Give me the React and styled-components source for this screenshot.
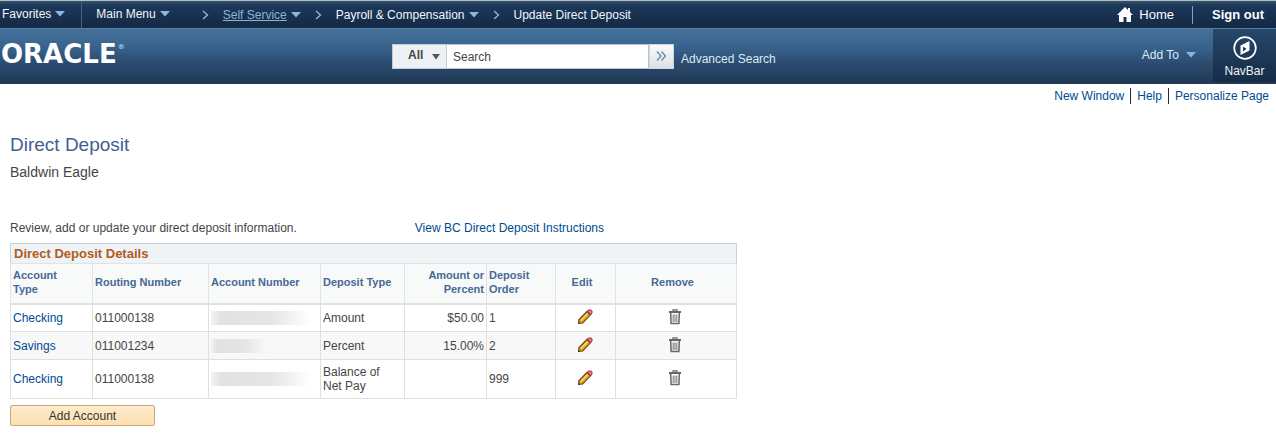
import React from 'react';
import styled, { createGlobalStyle } from 'styled-components';

const GlobalStyle = createGlobalStyle`
  body {
    margin: 0;
    background: white;
    color: #454545;
    font-family: 'Liberation Sans', Arial, sans-serif;
    font-size: 12px;
    line-height: 14px;
  }
  a {
    color: #004b91;
    text-decoration: none;
  }
`;

// TOP BAR
const TopBar = styled.nav`
  display: flex;
  align-items: center;
  justify-content: space-between;
  height: 28px;
  box-sizing: border-box;
  border-top: 1px solid #a9bfcf;
  background: linear-gradient(#3c5264 0, #1c395b 4px, #17304e 60%, #142a45);
`;

const Crumbs = styled.div`
  display: flex;
  align-items: center;
  height: 100%;
`;

const MenuButton = styled.button`
  display: flex;
  align-items: center;
  gap: 4px;
  padding: 0 0 2px;
  border: 0;
  background: none;
  color: #f2f6fa;
  font: inherit;
  white-space: nowrap;
`;

const CrumbLabel = styled.span`
  color: ${props => (props.$visited ? '#8fb3d3' : 'inherit')};
  text-decoration: ${props => (props.$visited ? 'underline' : 'none')};
`;

const FavoritesBox = styled.div`
  display: flex;
  align-items: center;
  height: 100%;
  padding: 0 16px 0 2px;
  margin-right: 14px;
  border-right: 1px solid #4b6078;
`;

const Trail = styled.ol`
  display: flex;
  align-items: center;
  gap: 14px;
  margin: 0 0 0 32px;
  padding: 0;
  list-style: none;
`;

const TrailItem = styled.li`
  display: flex;
  align-items: center;
  gap: 14px;
  color: #f2f6fa;
  white-space: nowrap;
  ${MenuButton} {
    padding: 0;
  }
`;

const TopLinks = styled.div`
  display: flex;
  align-items: center;
  padding: 0 12px 0 0;
`;

const HomeLink = styled.a`
  && {
    color: white;
  }
  display: flex;
  align-items: center;
  gap: 6px;
  padding-right: 18px;
  border-right: 1px solid #8da0b3;
  font-size: 13px;
  line-height: 18px;
`;

const SignOutLink = styled.a`
  && {
    color: white;
  }
  padding-left: 19px;
  font-size: 13px;
  font-weight: bold;
`;

// HEADER
const Header = styled.header`
  display: flex;
  height: 56px;
  box-sizing: border-box;
  border-top: 1px solid #547ea2;
  border-bottom: 2px solid #223a53;
  background: linear-gradient(#447099, #3a658f 30%, #2d4f74 60%, #203a57);
`;

const Logo = styled.div`
  flex: 0 0 392px;
  display: flex;
  align-items: flex-start;
  padding: 11px 0 0 1px;
  box-sizing: border-box;
  color: white;
  font-family: 'DejaVu Sans', sans-serif;
  font-size: 26px;
  font-weight: bold;
  line-height: 28px;
`;

const LogoMark = styled.span`
  padding-left: 1px;
  color: #a9cdec;
  font-size: 7px;
  line-height: 14px;
`;

const SearchForm = styled.form`
  display: flex;
  align-items: flex-start;
  padding-top: 15px;
`;

const ScopeBox = styled.div`
  display: flex;
  align-items: center;
  width: 55px;
  height: 25px;
  box-sizing: border-box;
  padding: 0 6px 0 15px;
  border: 1px solid #c3cbd3;
  background: #eef1f4;
`;

const ScopeSelect = styled.select`
  flex: 1;
  min-width: 0;
  padding: 0 0 4px;
  border: 0;
  appearance: none;
  background: none;
  color: #454545;
  font: bold 12px 'Liberation Sans', Arial, sans-serif;
`;

const SearchInput = styled.input`
  width: 202px;
  height: 25px;
  box-sizing: border-box;
  padding: 0 6px;
  border: 1px solid #b9c4cf;
  border-left: 0;
  border-radius: 0;
  background: white;
  font: 12px 'Liberation Sans', Arial, sans-serif;
  outline: none;
  &::placeholder {
    color: #454545;
    opacity: 1;
  }
`;

const GoButton = styled.button`
  display: flex;
  align-items: center;
  justify-content: center;
  width: 25px;
  height: 25px;
  padding: 0 0 2px;
  border: 1px solid #cfd6de;
  background: linear-gradient(#fafafb, #dde1e6);
`;

const AdvancedLink = styled.a`
  && {
    color: #dde9f5;
  }
  padding: 8px 0 0 7px;
  white-space: nowrap;
`;

const HeaderTools = styled.div`
  display: flex;
  margin-left: auto;
`;

const AddTo = styled(MenuButton)`
  padding: 0 17px 2px 0;
  gap: 7px;
  color: #dde9f5;
`;

const NavBarButton = styled.button`
  display: flex;
  flex-direction: column;
  align-items: center;
  gap: 4px;
  width: 63px;
  padding: 7px 0 0;
  border: 0;
  background: linear-gradient(#27476b, #1c3655 60%, #172d47);
  color: #eef4fa;
  font: 12px/14px 'Liberation Sans', Arial, sans-serif;
`;

// PAGE
const PageLinks = styled.div`
  display: flex;
  justify-content: flex-end;
  padding: 4px 7px 0 0;
`;

const PageLink = styled.a`
  padding: 0 0 0 6px;
  line-height: 16px;
  &:not(:last-child) {
    padding-right: 6px;
    border-right: 1px solid #1d2c4d;
  }
`;

const Page = styled.main`
  padding: 30px 10px 0;
`;

const Title = styled.h1`
  margin: 0;
  color: #426090;
  font-size: 19px;
  font-weight: normal;
  line-height: 22px;
`;

const Person = styled.p`
  margin: 8px 0 40px;
  font-size: 14px;
  line-height: 16px;
`;

const Intro = styled.div`
  display: flex;
  gap: 118px;
  padding-top: 1px;
  margin-bottom: 8px;
`;

// TABLE
const Grid = styled.table`
  width: 727px;
  max-width: 100%;
  table-layout: fixed;
  border-collapse: collapse;
  border: 1px solid #c3d3dc;
  border-bottom-color: #dfdfdf;
`;

const GridTitle = styled.th`
  height: 20px;
  padding: 0 3px;
  box-sizing: border-box;
  background: #eff3f5;
  color: #b05c1c;
  font-size: 13px;
  line-height: 16px;
  text-align: left;
`;

const HeadCell = styled.th`
  height: 40px;
  padding: 0 ${props => (props.$align === 'center' ? '9px' : '2px')} 2px 2px;
  box-sizing: border-box;
  border: 1px solid #dfe3e6;
  border-bottom: 2px solid #e0e0e0;
  background: #f8f9f9;
  color: #476a94;
  font-size: 11px;
  line-height: 14px;
  text-align: ${props => props.$align || 'left'};
`;

const Row = styled.tr`
  background: ${props => (props.$striped ? '#f8f8f8' : 'white')};
`;

const Cell = styled.td`
  height: 28px;
  padding: ${props => (props.$tall ? '5px 2px' : '0 2px')};
  box-sizing: border-box;
  border: 1px solid #dfdfdf;
  text-align: ${props => props.$align || 'left'};
`;

const MaskedNumber = styled.div`
  width: ${props => (props.$short ? '56px' : '100px')};
  height: 14px;
  background: linear-gradient(90deg, #f4f4f4, #e2e2e2 10%, #e5e5e5 60%, transparent);
`;

const IconButton = styled.button`
  padding: 0 2px 2px 0;
  border: 0;
  background: none;
  vertical-align: middle;
  svg {
    display: block;
  }
`;

const AddButton = styled.button`
  display: block;
  width: 145px;
  height: 21px;
  margin-top: 6px;
  padding: 0;
  border: 1px solid #c9a876;
  border-radius: 2px;
  background: linear-gradient(#fdebcd, #fde0b0);
  color: #333;
  font: 12px 'Liberation Sans', Arial, sans-serif;
`;

const Arrow = ({ size = 10, color = '#8fb6da' }) => (
  <svg width={size} height="6" viewBox="0 0 10 6" preserveAspectRatio="none" aria-hidden="true">
    <path d="M0 0h10L5 5.5z" fill={color} />
  </svg>
);

const Chevron = () => (
  <svg width="7" height="10" viewBox="0 0 7 10" aria-hidden="true">
    <path d="M1 1l4.5 4L1 9" fill="none" stroke="#9fb9d0" strokeWidth="1.3" />
  </svg>
);

const HomeIcon = () => (
  <svg width="16" height="15" viewBox="0 0 16 15" aria-hidden="true">
    <path d="M8 0L0 8h2v7h4.500v-5h3v5H14V8h2l-3-3V1h-2v2z" fill="white" />
  </svg>
);

const CompassIcon = () => (
  <svg width="24" height="24" viewBox="0 0 24 24" aria-hidden="true">
    <circle cx="12" cy="12" r="10.800" fill="none" stroke="white" strokeWidth="1.700" />
    <path d="M7.500 9.500l9-4.500v9.500l-9 4.500z" fill="white" />
    <path d="M10 10.800l3.500 2-3.500 2.600z" fill="#1c3655" />
  </svg>
);

const GoIcon = () => (
  <svg width="11" height="10" viewBox="0 0 11 10" aria-hidden="true">
    <path d="M1 .5L5 5 1 9.500M5.500.5l4 4.500-4 4.500" fill="none" stroke="#5f88ae" strokeWidth="1.300" />
  </svg>
);

const PencilIcon = () => (
  <svg width="16" height="16" viewBox="0 0 16 16" aria-hidden="true">
    <path d="M1 15l.3-4.500L10 1.500l4.500 4L6 14.500z" fill="#6b4712" />
    <path d="M2.300 11.200L10 3.200l2.900 2.700L5.500 13.500l-3 .3z" fill="#d59c22" />
    <path d="M3 11.200L10 4l1.300 1.300L4.500 12.300z" fill="#f6d66a" />
    <path d="M9.500 2.500L11.500.5h2.500L15.500 2v2l-2 2.300z" fill="#a83240" />
    <path d="M11 2.500l1.200-1h1.300l1 1v1l-1 1.300z" fill="#ee7f86" />
    <path d="M1 15l.2-1.800 1.500 1.500z" fill="#3a2a10" />
  </svg>
);

const TrashIcon = () => (
  <svg width="12" height="16" viewBox="0 0 12 16" fill="none" stroke="#666" aria-hidden="true">
    <path d="M4 2V.8h4V2" strokeWidth="1.200" />
    <path d="M0 3h12" strokeWidth="2" />
    <path d="M1.700 4l.4 10.500h7.800L10.300 4" strokeWidth="1.500" />
    <path d="M4.200 5.500V13M6 5.500V13M7.800 5.500V13" strokeWidth=".9" />
  </svg>
);

const columns = [
  { label: 'Account Type', width: 82 },
  { label: 'Routing Number', width: 116 },
  { label: 'Account Number', width: 112 },
  { label: 'Deposit Type', width: 84 },
  { label: 'Amount or Percent', width: 82, align: 'right' },
  { label: 'Deposit Order', width: 69 },
  { label: 'Edit', width: 60, align: 'center' },
  { label: 'Remove', width: 121, align: 'center' },
];

const Column = styled.col`
  width: ${props => props.$width}px;
`;

const NarrowText = styled.div`
  max-width: 64px;
`;

const HeadText = styled.div`
  max-width: ${props => (props.$narrow ? '62px' : 'none')};
  margin-left: ${props => (props.$right ? 'auto' : '0')};
`;

const accounts = [
  { type: 'Checking', routing: '011000138', deposit: 'Amount', amount: '$50.00', order: '1' },
  { type: 'Savings', routing: '011001234', deposit: 'Percent', amount: '15.00%', order: '2', short: true },
  { type: 'Checking', routing: '011000138', deposit: 'Balance of Net Pay', amount: '', order: '999', tall: true },
];

export default function App() {
  return (
    <>
      <GlobalStyle />
      <TopBar>
        <Crumbs>
          <FavoritesBox>
            <MenuButton>Favorites <Arrow /></MenuButton>
          </FavoritesBox>
          <MenuButton>Main Menu <Arrow /></MenuButton>
          <Trail>
            <TrailItem>
              <Chevron />
              <MenuButton><CrumbLabel $visited>Self Service</CrumbLabel> <Arrow /></MenuButton>
            </TrailItem>
            <TrailItem>
              <Chevron />
              <MenuButton>Payroll &amp; Compensation <Arrow /></MenuButton>
            </TrailItem>
            <TrailItem>
              <Chevron />
              <span>Update Direct Deposit</span>
            </TrailItem>
          </Trail>
        </Crumbs>
        <TopLinks>
          <HomeLink href="#home"><HomeIcon /> Home</HomeLink>
          <SignOutLink href="#signout">Sign out</SignOutLink>
        </TopLinks>
      </TopBar>
      <Header>
        <Logo>ORACLE<LogoMark>®</LogoMark></Logo>
        <SearchForm onSubmit={e => e.preventDefault()}>
          <ScopeBox>
            <ScopeSelect aria-label="Search in">
              <option>All</option>
            </ScopeSelect>
            <Arrow size={8} color="#555" />
          </ScopeBox>
          <SearchInput type="text" placeholder="Search" aria-label="Search" />
          <GoButton type="submit" aria-label="Go"><GoIcon /></GoButton>
          <AdvancedLink href="#advanced">Advanced Search</AdvancedLink>
        </SearchForm>
        <HeaderTools>
          <AddTo>Add To <Arrow /></AddTo>
          <NavBarButton><CompassIcon />NavBar</NavBarButton>
        </HeaderTools>
      </Header>
      <PageLinks>
        <PageLink href="#window">New Window</PageLink>
        <PageLink href="#help">Help</PageLink>
        <PageLink href="#personalize">Personalize Page</PageLink>
      </PageLinks>
      <Page>
        <Title>Direct Deposit</Title>
        <Person>Baldwin Eagle</Person>
        <Intro>
          <span>Review, add or update your direct deposit information.</span>
          <a href="#instructions">View BC Direct Deposit Instructions</a>
        </Intro>
        <Grid>
          <colgroup>
            {columns.map(col => <Column key={col.label} $width={col.width} />)}
          </colgroup>
          <thead>
            <tr>
              <GridTitle colSpan={8}>Direct Deposit Details</GridTitle>
            </tr>
            <tr>
              {columns.map(col => (
                <HeadCell key={col.label} $align={col.align} scope="col">
                  <HeadText
                    $narrow={/Account Type|Percent|Order/.test(col.label)}
                    $right={col.align === 'right'}
                  >
                    {col.label}
                  </HeadText>
                </HeadCell>
              ))}
            </tr>
          </thead>
          <tbody>
            {accounts.map((row, i) => (
              <Row key={row.order} $striped={i % 2 === 1}>
                <Cell><a href="#account">{row.type}</a></Cell>
                <Cell>{row.routing}</Cell>
                <Cell><MaskedNumber $short={row.short} /></Cell>
                <Cell $tall={row.tall}><NarrowText>{row.deposit}</NarrowText></Cell>
                <Cell $align="right">{row.amount}</Cell>
                <Cell>{row.order}</Cell>
                <Cell $align="center"><IconButton aria-label="Edit"><PencilIcon /></IconButton></Cell>
                <Cell $align="center"><IconButton aria-label="Remove"><TrashIcon /></IconButton></Cell>
              </Row>
            ))}
          </tbody>
        </Grid>
        <AddButton>Add Account</AddButton>
      </Page>
    </>
  );
}
